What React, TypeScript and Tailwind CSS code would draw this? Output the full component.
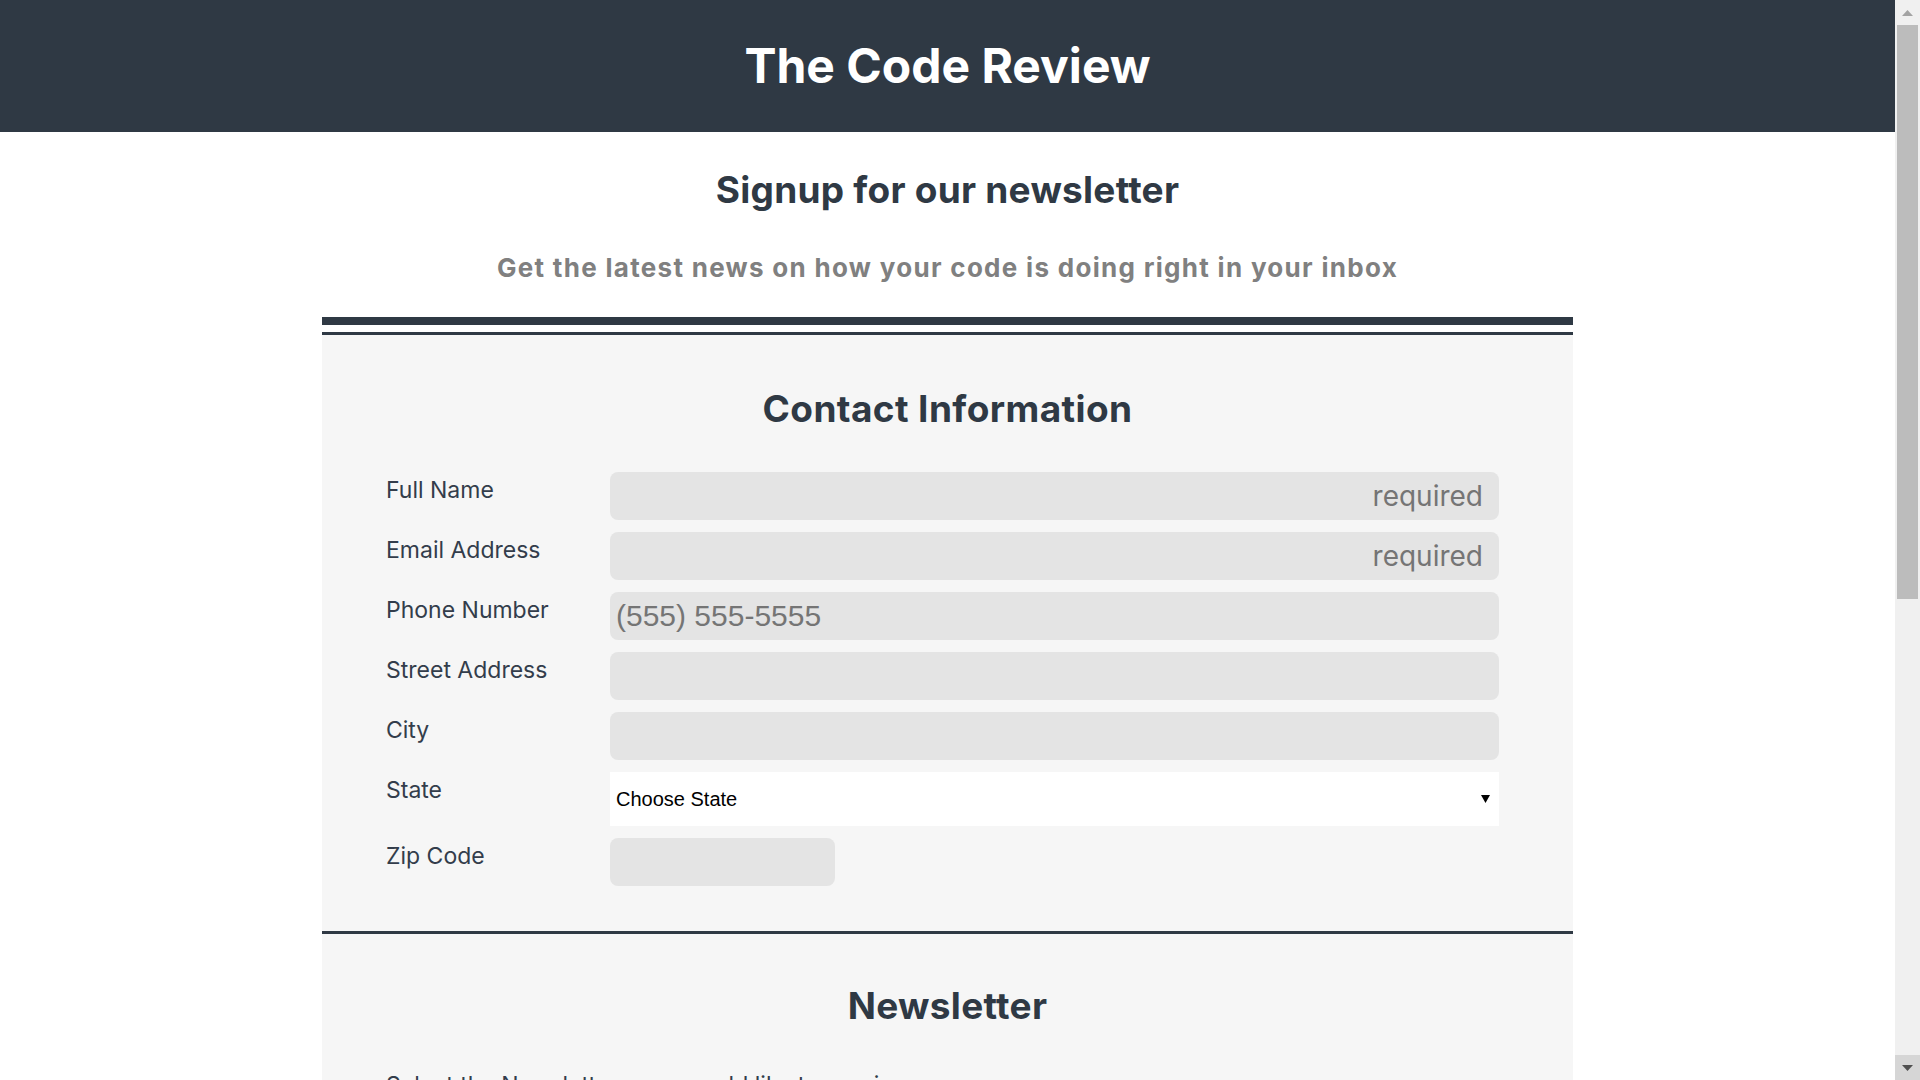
import React from "react";

const font = { fontFamily: "Inter, 'Noto Sans', sans-serif" };

function Row({ label, children }: { label: string; children: React.ReactNode }) {
  return (
    <div className="flex items-start">
      <label className="w-[224px] shrink-0 text-[23px] leading-[36px] text-[#333d4b]">{label}</label>
      {children}
    </div>
  );
}

function TextInput({ placeholder, right, width }: { placeholder?: string; right?: boolean; width?: string }) {
  if (right) {
    return (
      <input
        className={`${width ?? "w-[889px]"} h-12 rounded-lg bg-[#e4e4e4] outline-none text-right pr-4 text-[28px] placeholder:text-[#757575]`}
        placeholder={placeholder}
        style={font}
      />
    );
  }
  return (
    <input
      className={`${width ?? "w-[889px]"} h-12 rounded-lg bg-[#e4e4e4] outline-none pl-[6px] text-[30px] placeholder:text-[#757575]`}
      placeholder={placeholder}
      style={{ fontFamily: "'Liberation Sans', Arial, sans-serif" }}
    />
  );
}

function Check({ label }: { label: string }) {
  return (
    <label className="flex items-center gap-3 text-[23px] text-[#333d4b]">
      <input type="checkbox" className="w-5 h-5" />
      {label}
    </label>
  );
}

function Scrollbar() {
  return (
    <div className="w-[25px] shrink-0 h-full bg-[#f0f0f0] flex flex-col">
      <div className="h-[25px] flex items-center justify-center">
        <svg width="11" height="6" viewBox="0 0 11 6">
          <path d="M5.5 0 L11 6 H0 Z" fill="#a3a3a3" />
        </svg>
      </div>
      <div className="h-[574px] mx-[2px] bg-[#bcbcbc]" />
      <div className="flex-1" />
      <div className="h-[25px] bg-[#d6d6d6] flex items-center justify-center">
        <svg width="11" height="6" viewBox="0 0 11 6">
          <path d="M0 0 H11 L5.5 6 Z" fill="#505050" />
        </svg>
      </div>
    </div>
  );
}

export default function App() {
  return (
    <div className="h-screen w-full flex overflow-hidden bg-white" style={font}>
      <div className="flex-1 h-full overflow-hidden">
        <header className="h-[132px] bg-[#2f3944] flex items-center justify-center">
          <h1 className="text-[48px] font-bold text-white leading-none">The Code Review</h1>
        </header>

        <div className="text-center pt-[30px]">
          <h2 className="text-[37px] font-bold tracking-[0.25px] text-[#2f3944] leading-normal">Signup for our newsletter</h2>
          <p className="mt-[30px] text-[26px] font-bold tracking-[1.3px] text-[#808080] leading-normal">
            Get the latest news on how your code is doing right in your inbox
          </p>
        </div>

        <div className="w-[1251px] mx-auto mt-[30px]">
          <div className="h-[8px] bg-[#2f3944]" />
          <section className="mt-[7px] border-t-[3px] border-[#2f3944] bg-[#f6f6f6] pt-[46px] pb-[45px]">
            <h2 className="text-center text-[37px] font-bold tracking-[0.4px] text-[#2f3944] leading-normal">Contact Information</h2>
            <div className="mt-[36px] ml-[64px] flex flex-col gap-3">
              <Row label="Full Name">
                <TextInput placeholder="required" right />
              </Row>
              <Row label="Email Address">
                <TextInput placeholder="required" right />
              </Row>
              <Row label="Phone Number">
                <TextInput placeholder="(555) 555-5555" />
              </Row>
              <Row label="Street Address">
                <TextInput />
              </Row>
              <Row label="City">
                <TextInput />
              </Row>
              <Row label="State">
                <div className="relative w-[889px] h-[54px]">
                  <select
                    className="appearance-none w-full h-full bg-white pl-[6px] text-[20px] text-black outline-none"
                    style={{ fontFamily: "'Liberation Sans', Arial, sans-serif" }}
                    defaultValue=""
                  >
                    <option value="">Choose State</option>
                    <option>Alabama</option>
                    <option>Alaska</option>
                  </select>
                  <svg className="absolute right-[9px] top-[23px] pointer-events-none" width="9" height="8" viewBox="0 0 9 8">
                    <path d="M0 0 H9 L4.5 8 Z" fill="#000" />
                  </svg>
                </div>
              </Row>
              <Row label="Zip Code">
                <TextInput width="w-[225px]" />
              </Row>
            </div>
          </section>

          <section className="border-t-[3px] border-[#2f3944] bg-[#f6f6f6] pt-[44px] pb-[60px]">
            <h2 className="text-center text-[37px] font-bold tracking-[0.3px] text-[#2f3944] leading-normal">Newsletter</h2>
            <div className="mt-[34px] ml-[64px] flex flex-col gap-4">
              <p className="text-[23px] text-[#333d4b]">Select the Newsletters you would like to receive</p>
              <Check label="HTML News" />
              <Check label="CSS News" />
              <Check label="JavaScript News" />
            </div>
          </section>
        </div>
      </div>
      <Scrollbar />
    </div>
  );
}
